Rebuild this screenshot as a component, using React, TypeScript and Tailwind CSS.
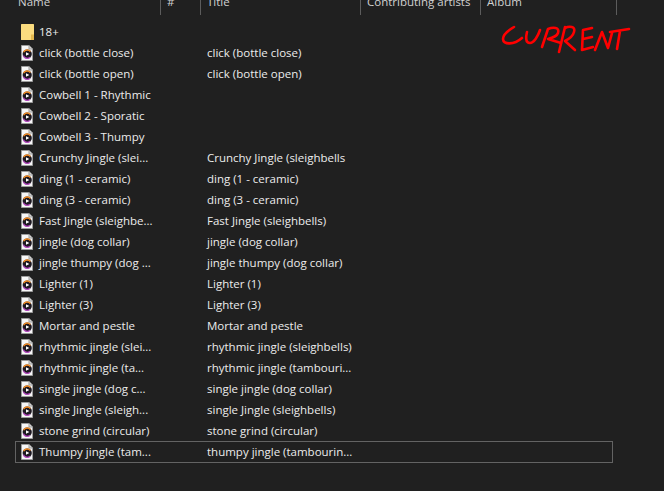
const rows: [string, string][] = [
  ["click (bottle close)", "click (bottle close)"],
  ["click (bottle open)", "click (bottle open)"],
  ["Cowbell 1 - Rhythmic", ""],
  ["Cowbell 2 - Sporatic", ""],
  ["Cowbell 3 - Thumpy", ""],
  ["Crunchy Jingle (slei...", "Crunchy Jingle (sleighbells"],
  ["ding (1 - ceramic)", "ding (1 - ceramic)"],
  ["ding (3 - ceramic)", "ding (3 - ceramic)"],
  ["Fast Jingle (sleighbe...", "Fast Jingle (sleighbells)"],
  ["jingle (dog collar)", "jingle (dog collar)"],
  ["jingle thumpy (dog ...", "jingle thumpy (dog collar)"],
  ["Lighter (1)", "Lighter (1)"],
  ["Lighter (3)", "Lighter (3)"],
  ["Mortar and pestle", "Mortar and pestle"],
  ["rhythmic jingle (slei...", "rhythmic jingle (sleighbells)"],
  ["rhythmic jingle (ta...", "rhythmic jingle (tambouri..."],
  ["single jingle (dog c...", "single jingle (dog collar)"],
  ["single Jingle (sleigh...", "single Jingle (sleighbells)"],
  ["stone grind (circular)", "stone grind (circular)"],
];

function FileIcon() {
  return (
    <svg width="12" height="16" viewBox="0 0 12 16" className="shrink-0">
      <path d="M0.5 0.5H8L11.5 4V15.5H0.5Z" fill="#f6f6f6" stroke="#9c9c9c" />
      <path d="M8 0.5V4H11.5" fill="#d8d8d8" stroke="#9c9c9c" />
      <circle cx="6.2" cy="9" r="4.6" fill="#1c1820" />
      <path d="M2.6 7.2A4 4 0 0 1 9.4 6.6" stroke="#f08a24" strokeWidth="1.4" fill="none" />
      <path d="M2.4 10.6A4 4 0 0 0 9 12.2" stroke="#b548c0" strokeWidth="1.4" fill="none" />
      <path d="M5 7.2L8.4 9L5 10.8Z" fill="#ffffff" />
    </svg>
  );
}

function FolderIcon() {
  return (
    <svg width="13" height="16" viewBox="0 0 13 16" className="shrink-0">
      <rect x="0" y="0" width="13" height="16" rx="0.5" fill="#fbdc7f" />
      <path d="M10 16V10.5H13V16Z" fill="#e5b94f" />
    </svg>
  );
}

function Row({ name, title, selected }: { name: string; title?: string; selected?: boolean }) {
  return (
    <div className={selected ? "ml-[15px] flex h-[22px] w-[598px] items-center border border-[#636363] pl-[5px]" : "ml-[15px] flex h-[21px] w-[598px] items-center pl-[6px]"}>
      <div className="flex w-[18px] shrink-0 items-center">{name === "18+" ? <FolderIcon /> : <FileIcon />}</div>
      <div className="w-[168px] shrink-0 whitespace-nowrap">{name}</div>
      <div className="whitespace-nowrap">{title}</div>
    </div>
  );
}

const columns = [
  { label: "Name", cls: "w-[161px] pl-[18px]" },
  { label: "#", cls: "w-[40px] pl-[6px]" },
  { label: "Title", cls: "w-[160px] pl-[6px]" },
  { label: "Contributing artists", cls: "w-[120px] pl-[6px]" },
  { label: "Album", cls: "w-[136px] pl-[6px]" },
];

export default function App() {
  return (
    <div className="relative h-[491px] w-[664px] overflow-hidden bg-[#202020] font-['Open_Sans','Noto_Sans',sans-serif] text-[11.5px] text-[#ececec]">
      <div className="flex h-[15px] w-[617px] overflow-hidden text-[#d0d0d0]">
        {columns.map((c) => (
          <div key={c.label} className={`${c.cls} h-[15px] border-r border-[#5c5c5c]`}>
            <div className="-mt-[8px] whitespace-nowrap leading-[20px]">{c.label}</div>
          </div>
        ))}
      </div>
      <div className="pt-[6px]">
        <Row name="18+" />
        {rows.map((r) => (
          <Row key={r[0]} name={r[0]} title={r[1]} />
        ))}
        <Row name="Thumpy jingle (tam..." title="thumpy jingle (tambourin..." selected />
      </div>
      <svg className="absolute left-[495px] top-[18px]" width="140" height="40" viewBox="0 0 140 40" fill="none" stroke="#ff0000" strokeWidth="2.6" strokeLinecap="round" strokeLinejoin="round">
        <path d="M19 9C14 12 8 16 8 21C8 27 19 27 27 20" />
        <path d="M32 14C31 18 30 25 35 25C39 25 43 18 45 12" />
        <path d="M53 11L47 29M53 11C58 9 65 9 63 15C62 18 57 20 53 21L66 25" />
        <path d="M70 9L64 34M70 10C74 8 81 8 79 14C78 18 74 21 70 23L80 32" />
        <path d="M97 10L88 12L87 32L98 29M88 21L97 19" />
        <path d="M100 32L107 14L113 30L117 15" />
        <path d="M115 14L134 11M125 13L122 31" />
      </svg>
    </div>
  );
}
